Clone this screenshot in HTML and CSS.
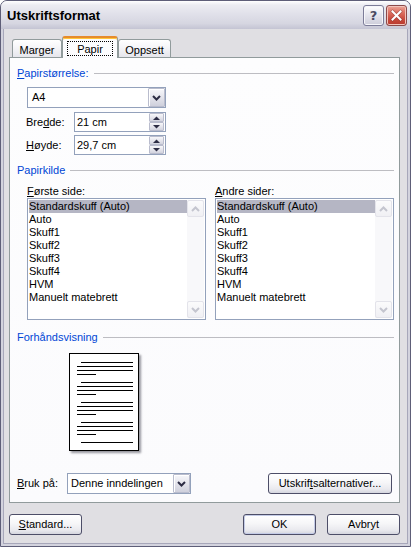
FILE: index.html
```html
<!DOCTYPE html>
<html lang="no">
<head>
<meta charset="utf-8">
<title>Utskriftsformat</title>
<link rel="stylesheet" href="styles.css">
</head>
<body>
<div class="window">
  <div class="titlebar">
    <div class="title">Utskriftsformat</div>
    <div class="caption-buttons">
      <div class="cap-btn help">?</div>
      <div class="cap-btn close">
        <svg width="13" height="13" viewBox="0 0 13 13"><path d="M2.5 2.5 L10.5 10.5 M10.5 2.5 L2.5 10.5" stroke="#5a2020" stroke-width="3.2" stroke-linecap="square" opacity="0.35"/><path d="M2.5 2.5 L10.5 10.5 M10.5 2.5 L2.5 10.5" stroke="#ffffff" stroke-width="2" stroke-linecap="square"/></svg>
      </div>
    </div>
  </div>
  <div class="client">
    <div class="tabs">
      <div class="tab">Marger</div>
      <div class="tab active"><span class="focus">Papir</span></div>
      <div class="tab">Oppsett</div>
    </div>
    <div class="panel">
      <div class="group-head first"><span class="group-label"><u>P</u>apirstørrelse:</span><span class="rule"></span></div>
      <div class="combo size-combo">
        <span class="combo-value">A4</span>
        <span class="dd-btn"><svg width="9" height="6" viewBox="0 0 9 6"><path d="M1 1 L4.5 4.5 L8 1" fill="none" stroke="#2c2c44" stroke-width="2"/></svg></span>
      </div>
      <div class="field-row">
        <span class="field-label">Bre<u>d</u>de:</span>
        <div class="spin-edit">
          <span class="edit-value">21 cm</span>
          <span class="spin">
            <span class="spin-btn"><svg width="7" height="4" viewBox="0 0 7 4"><path d="M0 4 L3.5 0.5 L7 4 Z" fill="#2c2c44"/></svg></span>
            <span class="spin-btn"><svg width="7" height="4" viewBox="0 0 7 4"><path d="M0 0 L3.5 3.5 L7 0 Z" fill="#2c2c44"/></svg></span>
          </span>
        </div>
      </div>
      <div class="field-row second">
        <span class="field-label"><u>H</u>øyde:</span>
        <div class="spin-edit">
          <span class="edit-value">29,7 cm</span>
          <span class="spin">
            <span class="spin-btn"><svg width="7" height="4" viewBox="0 0 7 4"><path d="M0 4 L3.5 0.5 L7 4 Z" fill="#2c2c44"/></svg></span>
            <span class="spin-btn"><svg width="7" height="4" viewBox="0 0 7 4"><path d="M0 0 L3.5 3.5 L7 0 Z" fill="#2c2c44"/></svg></span>
          </span>
        </div>
      </div>

      <div class="group-head source-head"><span class="group-label">Papirkilde</span><span class="rule"></span></div>
      <div class="sources">
        <div class="src-col">
          <div class="src-label"><u>F</u>ørste side:</div>
          <div class="listbox">
            <div class="items">
              <div class="item selected">Standardskuff (Auto)</div>
              <div class="item">Auto</div>
              <div class="item">Skuff1</div>
              <div class="item">Skuff2</div>
              <div class="item">Skuff3</div>
              <div class="item">Skuff4</div>
              <div class="item">HVM</div>
              <div class="item">Manuelt matebrett</div>
            </div>
            <div class="scrollbar">
              <span class="sb-btn"><svg width="9" height="6" viewBox="0 0 9 6"><path d="M1 5 L4.5 1.5 L8 5" fill="none" stroke="#c4c5cf" stroke-width="2"/></svg></span>
              <span class="sb-btn"><svg width="9" height="6" viewBox="0 0 9 6"><path d="M1 1 L4.5 4.5 L8 1" fill="none" stroke="#c4c5cf" stroke-width="2"/></svg></span>
            </div>
          </div>
        </div>
        <div class="src-col">
          <div class="src-label"><u>A</u>ndre sider:</div>
          <div class="listbox">
            <div class="items">
              <div class="item selected">Standardskuff (Auto)</div>
              <div class="item">Auto</div>
              <div class="item">Skuff1</div>
              <div class="item">Skuff2</div>
              <div class="item">Skuff3</div>
              <div class="item">Skuff4</div>
              <div class="item">HVM</div>
              <div class="item">Manuelt matebrett</div>
            </div>
            <div class="scrollbar">
              <span class="sb-btn"><svg width="9" height="6" viewBox="0 0 9 6"><path d="M1 5 L4.5 1.5 L8 5" fill="none" stroke="#c4c5cf" stroke-width="2"/></svg></span>
              <span class="sb-btn"><svg width="9" height="6" viewBox="0 0 9 6"><path d="M1 1 L4.5 4.5 L8 1" fill="none" stroke="#c4c5cf" stroke-width="2"/></svg></span>
            </div>
          </div>
        </div>
      </div>

      <div class="group-head preview-head"><span class="group-label">Forhåndsvisning</span><span class="rule"></span></div>
      <div class="preview">
        <div class="page">
          <svg width="68" height="96" viewBox="0 0 68 96">
            <g fill="#000">
              <rect x="11" y="8" width="52" height="1"/><rect x="7" y="12" width="56" height="1"/><rect x="7" y="16" width="56" height="1"/><rect x="7" y="20" width="19" height="1"/>
              <rect x="11" y="28" width="52" height="1"/><rect x="7" y="32" width="56" height="1"/><rect x="7" y="36" width="56" height="1"/><rect x="7" y="40" width="19" height="1"/>
              <rect x="11" y="48" width="52" height="1"/><rect x="7" y="52" width="56" height="1"/><rect x="7" y="56" width="56" height="1"/><rect x="7" y="60" width="19" height="1"/>
              <rect x="11" y="68" width="52" height="1"/><rect x="7" y="72" width="56" height="1"/><rect x="7" y="76" width="56" height="1"/><rect x="7" y="80" width="19" height="1"/>
              <rect x="11" y="88" width="52" height="1"/>
            </g>
          </svg>
        </div>
      </div>

      <div class="apply-row">
        <span class="apply-label"><u>B</u>ruk på:</span>
        <div class="combo apply-combo">
          <span class="combo-value">Denne inndelingen</span>
          <span class="dd-btn"><svg width="9" height="6" viewBox="0 0 9 6"><path d="M1 1 L4.5 4.5 L8 1" fill="none" stroke="#2c2c44" stroke-width="2"/></svg></span>
        </div>
        <div class="btn options-btn">Utskrif<u>t</u>salternativer...</div>
      </div>
    </div>

    <div class="footer">
      <div class="btn"><u>S</u>tandard...</div>
      <div class="btn ok-btn default">OK</div>
      <div class="btn">Avbryt</div>
    </div>
  </div>
</div>
</body>
</html>
```

FILE: styles.css
```css
* { box-sizing: border-box; }

html, body {
  margin: 0;
  padding: 0;
}

body {
  width: 411px;
  height: 547px;
  overflow: hidden;
  background: #ffffff;
  font-family: "Liberation Sans", Arial, sans-serif;
  font-size: 11px;
  color: #000;
}

u { text-decoration: underline; text-underline-offset: 1px; }

.window {
  width: 411px;
  height: 547px;
  display: flex;
  flex-direction: column;
  border: 1px solid #5e5e78;
  border-radius: 7px 7px 0 0;
  background: #d3d3de;
  overflow: hidden;
}

/* ---------- title bar ---------- */
.titlebar {
  flex: none;
  height: 28px;
  display: flex;
  justify-content: space-between;
  align-items: flex-start;
  padding: 0 3px 0 6px;
  background: linear-gradient(to bottom, #ffffff 0%, #ececf2 14%, #e1e1ea 45%, #d6d6e1 80%, #c4c4d3 100%);
}

.title {
  padding-top: 7px;
  font-size: 13px;
  line-height: 16px;
  font-weight: bold;
  color: #000;
}

.caption-buttons {
  display: flex;
  gap: 2px;
  margin-top: 4px;
}

.cap-btn {
  width: 21px;
  height: 21px;
  border-radius: 3px;
  display: flex;
  align-items: center;
  justify-content: center;
}

.help {
  border: 1px solid #7c7c98;
  background: linear-gradient(to bottom, #ffffff 0%, #e6e6ee 45%, #cdcdda 100%);
  box-shadow: inset 0 0 0 1px #f6f6fa;
  font-family: "DejaVu Sans", sans-serif;
  font-weight: bold;
  font-size: 13px;
  color: #4a4a62;
  line-height: 1;
}

.close {
  border: 1px solid #8b4a4a;
  background: linear-gradient(to bottom, #eca699 0%, #dc6f61 35%, #c84a3d 70%, #b8392e 100%);
  box-shadow: inset 0 0 0 1px #f2c3ba;
}

/* ---------- client ---------- */
.client {
  flex: 1;
  margin: 0 2px 2px;
  border: 1px solid #a7a7ba;
  border-top: none;
  background: #e0dfe3;
  display: flex;
  flex-direction: column;
}

.tabs {
  flex: none;
  height: 22px;
  margin: 7px 0 -1px 8px;
  display: flex;
  align-items: flex-start;
  position: relative;
  z-index: 1;
}

.tab {
  height: 18px;
  margin-top: 3px;
  padding-top: 4px;
  line-height: 13px;
  text-align: center;
  border: 1px solid #919b9c;
  border-bottom: none;
  border-radius: 3px 3px 0 0;
  background: linear-gradient(to bottom, #ffffff 0%, #f6f6f9 40%, #e6e6ec 100%);
}

.tab:nth-child(1) { width: 50px; }
.tab:nth-child(3) { width: 53px; }

.tab.active {
  width: 56px;
  height: 22px;
  margin-top: 0;
  padding-top: 0;
  background: #fcfcfe;
  border-top: 2px solid #e68b2c;
  box-shadow: inset 0 1px 0 #ffc73c;
}

.focus {
  display: block;
  margin: 3px 4px 0;
  height: 15px;
  line-height: 12px;
  padding-top: 1px;
  border: 1px dotted #000;
}

.panel {
  flex: none;
  width: 391px;
  height: 446px;
  margin-left: 5px;
  border: 1px solid #919b9c;
  background: linear-gradient(to bottom, #fdfdfe 0%, #fbfbfd 100%);
  padding: 0 5px 0 7px;
  display: flex;
  flex-direction: column;
}

.panel > * { flex: none; }

.group-head {
  height: 14px;
  line-height: 14px;
  display: flex;
  align-items: center;
}

.group-head.first { margin-top: 8px; }
.group-head.source-head { margin-top: 8px; }
.group-head.preview-head { margin-top: 10px; }

.group-label { color: #0046d5; white-space: nowrap; }

.rule {
  flex: 1;
  height: 1px;
  margin-left: 5px;
  background: #bdbdc2;
}

/* ---------- combos / edits ---------- */
.combo {
  height: 21px;
  border: 1px solid #93a1bb;
  background: #fff;
  display: flex;
  align-items: center;
}

.combo-value {
  flex: 1;
  padding-left: 3px;
  line-height: 13px;
  white-space: nowrap;
}

.dd-btn {
  width: 17px;
  height: 19px;
  display: flex;
  align-items: center;
  justify-content: center;
  border: 1px solid #b9bccd;
  border-radius: 1px;
  background: linear-gradient(to bottom, #f7f7fa 0%, #e4e4ec 50%, #cfd0dc 100%);
  box-shadow: inset 1px 1px 0 #ffffff;
}

.size-combo {
  width: 139px;
  margin: 7px 0 0 10px;
}

.size-combo .combo-value { padding-left: 4px; }

.field-row {
  height: 20px;
  margin: 4px 0 0 9px;
  display: flex;
  align-items: center;
}

.field-row.second { margin-top: 3px; }

.field-label {
  width: 48px;
  line-height: 13px;
}

.spin-edit {
  width: 92px;
  height: 20px;
  border: 1px solid #93a1bb;
  background: #fff;
  display: flex;
  align-items: center;
  padding-left: 2px;
}

.edit-value { flex: 1; line-height: 13px; }

.spin {
  width: 15px;
  height: 18px;
  margin-right: 1px;
  display: flex;
  flex-direction: column;
}

.spin-btn {
  flex: 1;
  display: flex;
  align-items: center;
  justify-content: center;
  border: 1px solid #b9bccd;
  border-radius: 1px;
  background: linear-gradient(to bottom, #f7f7fa 0%, #e2e2ea 60%, #d2d3de 100%);
}

/* ---------- paper source ---------- */
.sources {
  margin: 7px 0 0 10px;
  display: flex;
  gap: 9px;
}

.src-col { width: 179px; }

.src-label {
  height: 14px;
  line-height: 14px;
}

.listbox {
  height: 122px;
  border: 1px solid #93a1bb;
  background: #fff;
  padding: 1px;
  display: flex;
}

.items { flex: 1; }

.item {
  height: 13px;
  line-height: 13px;
  white-space: nowrap;
}

.item.selected { background: #b5b6c4; }

.scrollbar {
  width: 17px;
  display: flex;
  flex-direction: column;
  justify-content: space-between;
  background: #f8f8fa;
}

.sb-btn {
  width: 17px;
  height: 17px;
  display: flex;
  align-items: center;
  justify-content: center;
  border: 1px solid #e3e3ea;
  border-radius: 2px;
  background: linear-gradient(to bottom, #fbfbfc 0%, #f0f0f4 100%);
}

/* ---------- preview ---------- */
.preview {
  margin: 9px 0 0 52px;
  height: 98px;
}

.page {
  width: 70px;
  height: 98px;
  border: 1px solid #000;
  background: #fff;
  box-shadow: 2px 2px 2px rgba(70, 70, 80, 0.55);
}

.page svg { display: block; }

/* ---------- apply row ---------- */
.apply-row {
  margin-top: 22px;
  height: 21px;
  display: flex;
  align-items: center;
}

.apply-label { width: 50px; line-height: 13px; }

.apply-combo { width: 124px; }

.btn {
  height: 21px;
  width: 73px;
  display: flex;
  align-items: center;
  justify-content: center;
  line-height: 13px;
  border: 1px solid #4d4e68;
  border-radius: 3px;
  background: linear-gradient(to bottom, #ffffff 0%, #f6f6f8 45%, #e9e9ee 80%, #d5d6df 100%);
  white-space: nowrap;
}

.options-btn {
  width: 124px;
  margin-left: auto;
  margin-right: 2px;
}

/* ---------- footer ---------- */
.footer {
  flex: none;
  width: 391px;
  margin: 11px 0 0 5px;
  display: flex;
  gap: 11px;
}

.ok-btn { margin-left: auto; }

.default {
  box-shadow: inset 0 0 0 1px #c4cbe6;
}
```
